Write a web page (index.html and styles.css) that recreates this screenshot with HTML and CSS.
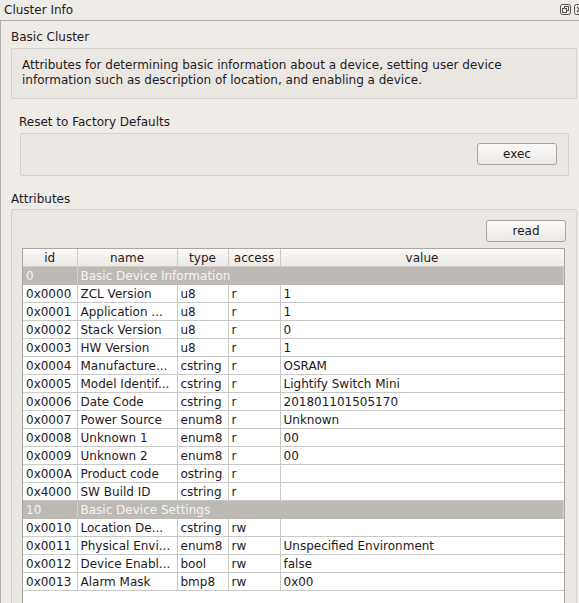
FILE: index.html
```html
<!DOCTYPE html>
<html lang="en">
<head>
    <meta charset="UTF-8">
    <title>Cluster Info</title>
    <link rel="stylesheet" href="styles.css">
</head>
<body>

    <!-- Dock: Cluster Info -->
    <div class="dock">
        <div class="dock-title">
            <span>Cluster Info</span>
            <span class="dock-btns">
                <svg width="11" height="11" viewBox="0 0 11 11">
                    <rect x="0.5" y="0.5" width="10" height="10" rx="2" fill="none" stroke="#55514d"/>
                    <rect x="4.5" y="2.5" width="4" height="4" fill="none" stroke="#55514d"/>
                    <rect x="2.5" y="4.5" width="4" height="4" fill="#efebe7" stroke="#55514d"/>
                </svg>
                <svg width="11" height="11" viewBox="0 0 11 11">
                    <rect x="0.5" y="0.5" width="10" height="10" rx="2" fill="none" stroke="#55514d"/>
                    <path d="M3 3 L8 8 M8 3 L3 8" stroke="#55514d" stroke-width="1.2"/>
                </svg>
            </span>
        </div>

        <div class="dock-body">
            <div class="label">Basic Cluster</div>
            <div class="box desc">
                Attributes for determining basic information about a device, setting user device
                information such as description of location, and enabling a device.
            </div>

            <div class="command">
                <div class="label">Reset to Factory Defaults</div>
                <div class="box cmd-box">
                    <button class="btn">exec</button>
                </div>
            </div>

            <div class="label attr-label">Attributes</div>
            <div class="box attr-box">
                <div class="toolbar">
                    <button class="btn">read</button>
                </div>
                <div class="grid">
                    <table>
                        <colgroup>
                            <col style="width: 54px">
                            <col style="width: 100px">
                            <col style="width: 51px">
                            <col style="width: 52px">
                            <col>
                        </colgroup>
                        <thead>
                            <tr><th>id</th><th>name</th><th>type</th><th>access</th><th>value</th></tr>
                        </thead>
                        <tbody>
                            <tr class="group"><td>0</td><td colspan="4">Basic Device Information</td></tr>
                            <tr><td>0x0000</td><td>ZCL Version</td><td>u8</td><td>r</td><td>1</td></tr>
                            <tr><td>0x0001</td><td>Application ...</td><td>u8</td><td>r</td><td>1</td></tr>
                            <tr><td>0x0002</td><td>Stack Version</td><td>u8</td><td>r</td><td>0</td></tr>
                            <tr><td>0x0003</td><td>HW Version</td><td>u8</td><td>r</td><td>1</td></tr>
                            <tr><td>0x0004</td><td>Manufacture...</td><td>cstring</td><td>r</td><td>OSRAM</td></tr>
                            <tr><td>0x0005</td><td>Model Identif...</td><td>cstring</td><td>r</td><td>Lightify Switch Mini</td></tr>
                            <tr><td>0x0006</td><td>Date Code</td><td>cstring</td><td>r</td><td>201801101505170</td></tr>
                            <tr><td>0x0007</td><td>Power Source</td><td>enum8</td><td>r</td><td>Unknown</td></tr>
                            <tr><td>0x0008</td><td>Unknown 1</td><td>enum8</td><td>r</td><td>00</td></tr>
                            <tr><td>0x0009</td><td>Unknown 2</td><td>enum8</td><td>r</td><td>00</td></tr>
                            <tr><td>0x000A</td><td>Product code</td><td>ostring</td><td>r</td><td></td></tr>
                            <tr><td>0x4000</td><td>SW Build ID</td><td>cstring</td><td>r</td><td></td></tr>
                            <tr class="group"><td>10</td><td colspan="4">Basic Device Settings</td></tr>
                            <tr><td>0x0010</td><td>Location De...</td><td>cstring</td><td>rw</td><td></td></tr>
                            <tr><td>0x0011</td><td>Physical Envi...</td><td>enum8</td><td>rw</td><td>Unspecified Environment</td></tr>
                            <tr><td>0x0012</td><td>Device Enabl...</td><td>bool</td><td>rw</td><td>false</td></tr>
                            <tr><td>0x0013</td><td>Alarm Mask</td><td>bmp8</td><td>rw</td><td>0x00</td></tr>
                        </tbody>
                    </table>
                </div>
            </div>
        </div>
    </div>

</body>
</html>
```

FILE: styles.css
```css
/* General Styles */
body, html {
    margin: 0;
    padding: 0;
    height: 100%;
    overflow: hidden;
    background: #efebe7;
    font-family: 'DejaVu Sans', sans-serif;
    font-size: 12px;
    color: #1e1a1c;
}

.dock {
    display: flex;
    flex-direction: column;
    height: 100%;
}

.dock-title {
    display: flex;
    flex-shrink: 0;
    align-items: center;
    justify-content: space-between;
    height: 20px;
    padding-left: 4px;
    border-bottom: 1px solid #b3afab;
}

.dock-btns {
    display: flex;
    gap: 3px;
    margin-right: -6px;
    margin-top: -1px;
}

.dock-btns svg {
    display: block;
}

.dock-body {
    flex: 1;
    border-left: 1px solid #b3afab;
    padding: 8px 2px 0 10px;
}

.label {
    line-height: 16px;
    margin-bottom: 3px;
}

.box {
    background: #ebe8e4;
    border: 1px solid #d5d1cd;
    border-radius: 2px;
}

.desc {
    padding: 9px 10px 10px 10px;
    line-height: 15px;
}

/* Command group */
.command {
    margin: 15px 8px 0 9px;
}

.command .label {
    margin-left: -1px;
}

.cmd-box {
    display: flex;
    justify-content: flex-end;
    padding: 9px 11px 10px 0;
}

.btn {
    width: 80px;
    height: 22px;
    padding: 0;
    border: 1px solid #a9a6a2;
    border-radius: 3px;
    background: linear-gradient(#fbfaf9, #ebe8e5);
    font-family: 'DejaVu Sans', sans-serif;
    font-size: 12px;
    color: #1e1a1c;
}

/* Attributes */
.attr-label {
    margin-top: 15px;
    margin-bottom: 2px;
}

.attr-box {
    height: 500px;
    padding: 10px 10px 0 10px;
}

.toolbar {
    display: flex;
    justify-content: flex-end;
    margin-bottom: 6px;
}

.grid {
    background: #fff;
    border: 1px solid #a9a6a2;
    margin-right: 1px;
    height: 400px;
}

table {
    width: 100%;
    border-collapse: collapse;
    table-layout: fixed;
}

th {
    height: 17px;
    padding: 0;
    font-weight: normal;
    text-align: center;
    background: linear-gradient(#fbfaf9, #ebe8e5);
    border-right: 1px solid #cfcbc7;
    border-bottom: 1px solid #cfcbc7;
}

th:last-child, td:last-child {
    border-right: none;
}

td {
    height: 17px;
    padding: 0 0 0 3px;
    white-space: nowrap;
    overflow: hidden;
    border-right: 1px solid #c9c9c9;
    border-bottom: 1px solid #c9c9c9;
}

tr.group td {
    background: #bdb9b5;
    color: #f6f4f2;
    border-right: 1px solid #d4d0cc;
    border-bottom: 1px solid #bdb9b5;
}
```
